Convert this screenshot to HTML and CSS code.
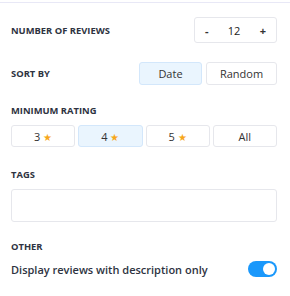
FILE: index.html
```html
<!DOCTYPE html>
<html lang="en">

<head>
    <meta charset="utf-8">
    <meta name="viewport" content="width=device-width, initial-scale=1.0">
    <title>Review settings</title>
    <link rel="stylesheet" href="styles.css">
</head>

<body>
    <div class="panel">
        <div class="row">
            <span class="label">Number of reviews</span>
            <div class="stepper">
                <button>-</button>
                <span class="count">12</span>
                <button>+</button>
            </div>
        </div>

        <div class="row sort">
            <span class="label">Sort by</span>
            <div class="sort-buttons">
                <button class="opt valgt date">Date</button>
                <button class="opt random">Random</button>
            </div>
        </div>

        <div class="label rating-label">Minimum rating</div>
        <div class="rating">
            <button class="opt">3 <span class="star">&#9733;</span></button>
            <button class="opt valgt">4 <span class="star">&#9733;</span></button>
            <button class="opt">5 <span class="star">&#9733;</span></button>
            <button class="opt">All</button>
        </div>

        <div class="label tags-label">Tags</div>
        <div class="tags"></div>

        <div class="label other-label">Other</div>
        <div class="row toggle-row">
            <span class="toggle-text">Display reviews with description only</span>
            <span class="toggle"><span class="knob"></span></span>
        </div>
    </div>
</body>

</html>
```

FILE: styles.css
```css
* {
    box-sizing: border-box;
}

body {
    margin: 0;
    font-family: "Open Sans", sans-serif;
    color: #2b2f3a;
    background: #fff;
}

.panel {
    border-top: 1px solid #e8e8f6;
    margin-top: 2px;
    padding: 14px 13px 0 11px;
}

.row {
    display: flex;
    justify-content: space-between;
    align-items: center;
}

.label {
    font-size: 9.4px;
    font-weight: 700;
    text-transform: uppercase;
    color: #2e3341;
}

button {
    font-family: inherit;
    cursor: pointer;
}

.stepper {
    width: 83px;
    height: 26px;
    border: 1px solid #e6e7ec;
    border-radius: 3px;
    display: flex;
    align-items: center;
    justify-content: space-between;
    padding: 0 6px;
}

.stepper button {
    border: none;
    background: none;
    font-size: 11px;
    font-weight: 700;
    color: #333;
    padding: 0 4px;
}

.count {
    font-size: 11px;
    color: #222;
}

.sort {
    margin-top: 19px;
}

.sort-buttons {
    display: flex;
    gap: 4px;
}

.opt {
    height: 23px;
    border: 1px solid #e6e7ec;
    border-radius: 3px;
    background: #fff;
    font-size: 11px;
    color: #333;
    padding: 0;
}

.date {
    width: 63px;
}

.random {
    width: 71px;
}

.valgt {
    background: #eaf5fe;
    border-color: #d3e7fb;
}

.rating-label {
    margin-top: 19px;
}

.rating {
    display: grid;
    grid-template-columns: repeat(4, 1fr);
    gap: 3px;
    margin-top: 8px;
}

.rating .opt {
    height: 22px;
}

.star {
    color: #f7a71b;
    font-size: 10px;
}

.tags-label {
    margin-top: 21px;
}

.tags {
    height: 33px;
    margin-top: 8px;
    border: 1px solid #e6e7ec;
    border-radius: 3px;
}

.other-label {
    margin-top: 18px;
}

.toggle-row {
    margin-top: 8px;
}

.toggle-text {
    font-size: 11px;
    font-weight: 600;
    color: #2e3341;
}

.toggle {
    width: 29px;
    height: 16px;
    border-radius: 8px;
    background: #1a98fb;
    display: flex;
    justify-content: flex-end;
    align-items: center;
    padding: 2px;
}

.knob {
    width: 12px;
    height: 12px;
    border-radius: 50%;
    background: #fff;
}
```
